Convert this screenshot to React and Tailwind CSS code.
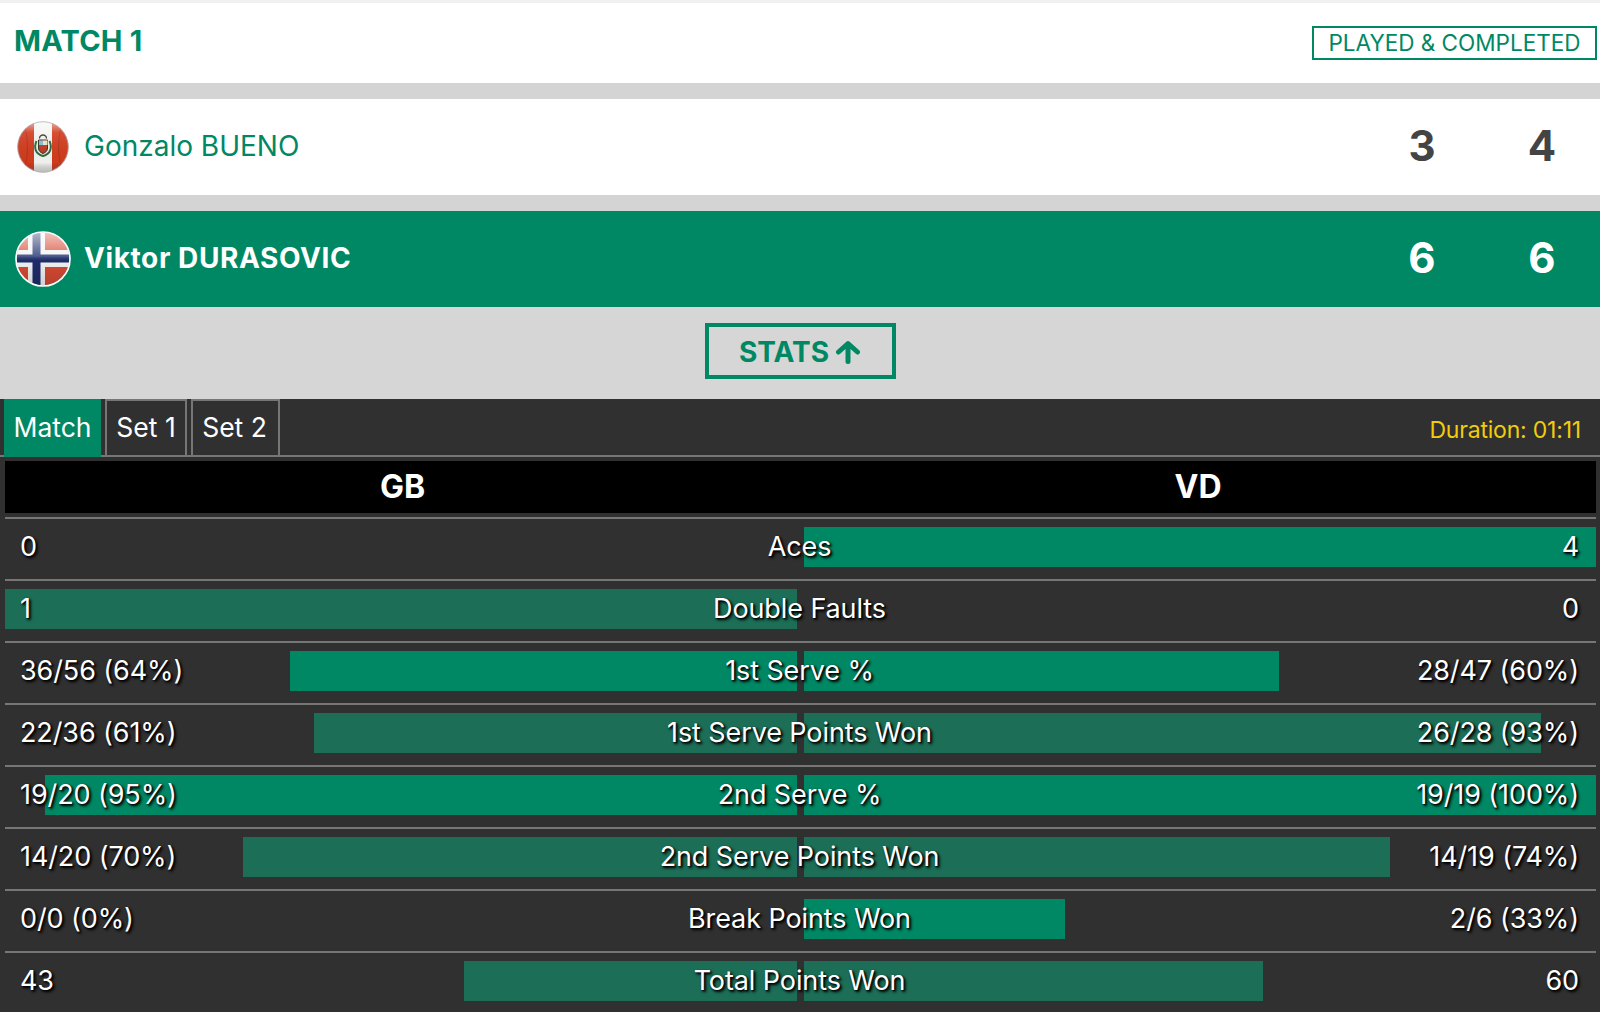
import React from "react";

const FONT = "[font-family:Inter,'Liberation_Sans',sans-serif]";

const rows = [
  { l: "0", label: "Aces", r: "4", lw: 0, rw: 100 },
  { l: "1", label: "Double Faults", r: "0", lw: 100, rw: 0 },
  { l: "36/56 (64%)", label: "1st Serve %", r: "28/47 (60%)", lw: 64, rw: 60 },
  { l: "22/36 (61%)", label: "1st Serve Points Won", r: "26/28 (93%)", lw: 61, rw: 93 },
  { l: "19/20 (95%)", label: "2nd Serve %", r: "19/19 (100%)", lw: 95, rw: 100 },
  { l: "14/20 (70%)", label: "2nd Serve Points Won", r: "14/19 (74%)", lw: 70, rw: 74 },
  { l: "0/0 (0%)", label: "Break Points Won", r: "2/6 (33%)", lw: 0, rw: 33 },
  { l: "43", label: "Total Points Won", r: "60", lw: 42, rw: 58 },
];

function PeruFlag() {
  return (
    <svg width="52" height="52" viewBox="0 0 52 52" className="shrink-0">
      <defs>
        <clipPath id="peruClip"><circle cx="26" cy="26" r="25.5" /></clipPath>
        <linearGradient id="peruShine" x1="0" y1="0" x2="0" y2="1">
          <stop offset="0" stopColor="#fff" stopOpacity="0.6" />
          <stop offset="0.22" stopColor="#fff" stopOpacity="0.1" />
          <stop offset="0.8" stopColor="#000" stopOpacity="0.02" />
          <stop offset="1" stopColor="#666" stopOpacity="0.4" />
        </linearGradient>
      </defs>
      <g clipPath="url(#peruClip)">
        <rect width="52" height="52" fill="#f4f4f2" />
        <rect width="17" height="52" fill="#d23c1e" />
        <rect x="35" width="17" height="52" fill="#d23c1e" />
        <path d="M8 6 Q13 26 8 46" stroke="#a52a14" strokeWidth="1" fill="none" opacity="0.6" />
        <path d="M44 6 Q39 26 44 46" stroke="#a52a14" strokeWidth="1" fill="none" opacity="0.6" />
        <path d="M19.5 20 C16.5 27 18.5 33 26 35 C33.5 33 35.5 27 32.5 20" fill="none" stroke="#2b6a3a" strokeWidth="2" />
        <path d="M21.5 19 h9 v8 c0 3 -2 4.5 -4.5 5.5 c-2.5 -1 -4.5 -2.5 -4.5 -5.5 z" fill="#c23a26" stroke="#3a3020" strokeWidth="1" />
        <rect x="22" y="19.5" width="4" height="4.5" fill="#7fc4dc" />
        <rect x="26" y="19.5" width="4.5" height="4.5" fill="#e8e8c8" />
        <path d="M22.5 17.5 a3.5 3.5 0 1 1 7 0" fill="none" stroke="#3a3a30" strokeWidth="1.4" />
        <rect width="52" height="52" fill="url(#peruShine)" />
      </g>
      <circle cx="26" cy="26" r="25.3" fill="none" stroke="#b0b0b0" strokeWidth="0.8" />
    </svg>
  );
}

function NorwayFlag() {
  return (
    <svg width="56" height="56" viewBox="0 0 56 56" className="shrink-0">
      <defs>
        <clipPath id="norClip"><circle cx="28" cy="28" r="26.5" /></clipPath>
        <linearGradient id="norShine" x1="0" y1="0" x2="0" y2="1">
          <stop offset="0" stopColor="#fff" stopOpacity="0.7" />
          <stop offset="0.45" stopColor="#fff" stopOpacity="0.22" />
          <stop offset="0.55" stopColor="#000" stopOpacity="0.02" />
          <stop offset="1" stopColor="#000" stopOpacity="0.15" />
        </linearGradient>
      </defs>
      <g clipPath="url(#norClip)">
        <rect width="56" height="56" fill="#d64a34" />
        <rect x="13" width="17" height="56" fill="#f3f3f3" />
        <rect y="19" width="56" height="17" fill="#f3f3f3" />
        <rect x="17.5" width="8" height="56" fill="#1d2c6c" />
        <rect y="23.5" width="56" height="8" fill="#1d2c6c" />
        <rect width="56" height="56" fill="url(#norShine)" />
      </g>
      <circle cx="28" cy="28" r="27" fill="none" stroke="#ffffff" strokeWidth="1.6" />
    </svg>
  );
}

function StatRow({ row, index }) {
  const bright = index % 2 === 0;
  const bar = bright ? "bg-[#008864]" : "bg-[#1c6e56]";
  return (
    <div className="h-[62px] border-t-2 border-[#767676] pt-2">
      <div className="grid h-10">
        <div className="col-start-1 row-start-1 flex h-10 justify-between">
          <div className="flex w-[792px] justify-end">
            <div className={`h-10 ${bar}`} style={{ width: `${row.lw}%` }} />
          </div>
          <div className="flex w-[792px] justify-start">
            <div className={`h-10 ${bar}`} style={{ width: `${row.rw}%` }} />
          </div>
        </div>
        <div className="col-start-1 row-start-1 grid h-10 grid-cols-[1fr_auto_1fr] items-center pb-[1px] pl-[15px] pr-[17px] text-[27px] leading-10 tracking-[-0.1px] text-white [text-shadow:2px_2px_3px_#000,1px_1px_2px_#000]">
          <span className="text-left">{row.l}</span>
          <span className="text-center">{row.label}</span>
          <span className="text-right">{row.r}</span>
        </div>
      </div>
    </div>
  );
}

export default function App() {
  return (
    <div className={`h-[1012px] w-[1600px] overflow-hidden bg-[#303030] ${FONT}`}>
      <div className="flex h-[83px] items-center justify-between border-t-[3px] border-[#f0f0f0] bg-white pb-[4px] pl-[14px] pr-[3px]">
        <h1 className="pb-[2px] text-[29px] font-bold leading-none tracking-[0.2px] text-[#008864]">MATCH 1</h1>
        <div className="mt-[3px] flex h-[34px] w-[285px] items-center justify-center border-2 border-[#008864] pt-[2px] text-[22.5px] leading-none text-[#008864]">
          PLAYED &amp; COMPLETED
        </div>
      </div>

      <div className="h-4 bg-[#d4d4d4]" />

      <div className="flex h-24 items-center bg-white pl-[17px] text-[#008864]">
        <PeruFlag />
        <span className="ml-[15px] flex-1 pb-[2px] text-[28px]">Gonzalo BUENO</span>
        <div className="flex pb-[3px] text-[42px] font-bold text-[#444444]">
          <span className="w-[120px] text-center">3</span>
          <span className="mr-[-2px] w-[120px] text-center">4</span>
        </div>
      </div>

      <div className="h-4 bg-[#d4d4d4]" />

      <div className="flex h-24 items-center bg-[#008864] pl-[15px] text-white">
        <NorwayFlag />
        <span className="ml-[13px] flex-1 pb-[2px] text-[28px] font-bold tracking-[0.6px]">Viktor DURASOVIC</span>
        <div className="flex pb-[3px] text-[42px] font-bold">
          <span className="w-[120px] text-center">6</span>
          <span className="mr-[-2px] w-[120px] text-center">6</span>
        </div>
      </div>

      <div className="flex h-[92px] items-start justify-center bg-[#d6d6d6] pt-4">
        <button className="flex h-[56px] w-[191px] items-center justify-center gap-[6px] border-4 border-[#008864] text-[28px] font-bold text-[#008864]">
          <span className="pt-[1px]">STATS</span>
          <svg width="26" height="24" viewBox="0 0 26 24" className="mt-[2px]" fill="none" stroke="#008864" strokeWidth="5" strokeLinecap="round" strokeLinejoin="round">
            <path d="M13 21.5 V4 M3.5 12 L13 3.5 L22.5 12" />
          </svg>
        </button>
      </div>

      <div className="flex h-[58px] items-end justify-between border-b-2 border-[#767676] pl-1 pr-[19px]">
        <div className="flex h-[56px] items-stretch gap-[4px]">
          <div className="-mb-[2px] flex w-[97px] items-center justify-center bg-[#008864] text-[26.5px] text-white">Match</div>
          <div className="flex w-[82px] items-center justify-center border-2 border-b-0 border-[#767676] text-[26.5px] text-white">Set 1</div>
          <div className="flex w-[89px] items-center justify-center border-2 border-b-0 border-[#767676] pr-[2px] text-[26.5px] text-white">Set 2</div>
        </div>
        <div className="self-center pt-[7px] text-[23px] tracking-[-0.2px] text-[#f2cc0c]">Duration: 01:11</div>
      </div>

      <div className="pl-[5px] pr-1 pt-1">
        <div className="flex h-[52px] items-center bg-black text-[32px] font-bold text-white">
          <div className="w-[795px] text-center">GB</div>
          <div className="flex-1 text-center">VD</div>
        </div>
        <div className="mt-1">
          {rows.map((row, i) => (
            <StatRow key={row.label} row={row} index={i} />
          ))}
        </div>
      </div>
    </div>
  );
}
